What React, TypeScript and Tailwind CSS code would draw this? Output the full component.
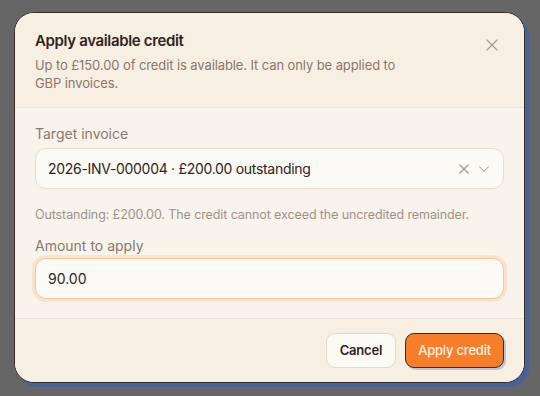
import { X, ChevronDown } from "lucide-react";

export default function App() {
  return (
    <div
      className="min-h-screen w-full bg-[#666666] pt-[12px] pl-[14px]"
      style={{ fontFamily: "Inter, 'Noto Sans', sans-serif" }}
    >
      <div className="w-[511px] overflow-hidden rounded-[20px] border-[1.5px] border-[#3a2a24] bg-[#f8f4ec] shadow-[4px_4px_0_0_#46629a]">
        {/* header */}
        <div className="relative border-b border-[#ebe3d6] bg-[#f7efe1] px-[20px] pt-[17px] pb-[15px]">
          <h2 className="text-[15px] font-semibold leading-[22px] tracking-[-0.35px] text-[#2e2420]">
            Apply available credit
          </h2>
          <p className="mt-[4px] max-w-[380px] text-[13px] leading-[18px] tracking-[-0.1px] text-[#8a776e]">
            Up to £150.00 of credit is available. It can only be applied to GBP invoices.
          </p>
          <button className="absolute right-[22px] top-[22px] text-[#a89a92]">
            <X size={20} strokeWidth={1.4} />
          </button>
        </div>

        {/* body */}
        <div className="px-[20px] pt-[16px] pb-[19px]">
          <label className="block text-[14px] leading-[20px] text-[#8a776e]">Target invoice</label>
          <div className="mt-[4px] flex h-[41px] items-center rounded-[11px] border border-[#e6ddd0] bg-[#fbfaf5] pl-[12px] pr-[10px]">
            <span className="flex-1 text-[14px] tracking-[-0.3px] text-[#2e2420]">
              2026-INV-000004 · £200.00 outstanding
            </span>
            <X size={16} strokeWidth={2.4} className="text-[#aca09a]" />
            <ChevronDown size={18} strokeWidth={1.4} className="ml-[3px] text-[#a89a92]" />
          </div>
          <p className="mt-[17px] text-[12.5px] leading-[17px] tracking-[-0.1px] text-[#a0918a]">
            Outstanding: £200.00. The credit cannot exceed the uncredited remainder.
          </p>
          <label className="mt-[13px] block text-[14px] leading-[20px] text-[#8a776e]">Amount to apply</label>
          <div className="mt-[2px] flex h-[41px] items-center rounded-[11px] border border-[#f7c49c] bg-[#fbfaf5] pl-[12px] ring-[3px] ring-[#f9e3cf]">
            <span className="text-[14px] text-[#2e2420]">90.00</span>
          </div>
        </div>

        {/* footer */}
        <div className="flex justify-end gap-[9px] border-t border-[#ebe3d6] bg-[#f7efe1] px-[20px] pt-[14px] pb-[14px]">
          <button className="h-[35px] rounded-[9px] border border-[#e2d9cc] bg-[#fbfaf5] px-[13px] text-[13px] font-semibold tracking-[-0.2px] text-[#2e2420]">
            Cancel
          </button>
          <button className="h-[35px] rounded-[9px] border border-[#3a2a24] bg-[#f77f2a] px-[12px] text-[13px] font-medium tracking-[-0.2px] text-[#fdf1e6] shadow-[2px_2px_0_0_#b8c6e0]">
            Apply credit
          </button>
        </div>
      </div>
    </div>
  );
}
